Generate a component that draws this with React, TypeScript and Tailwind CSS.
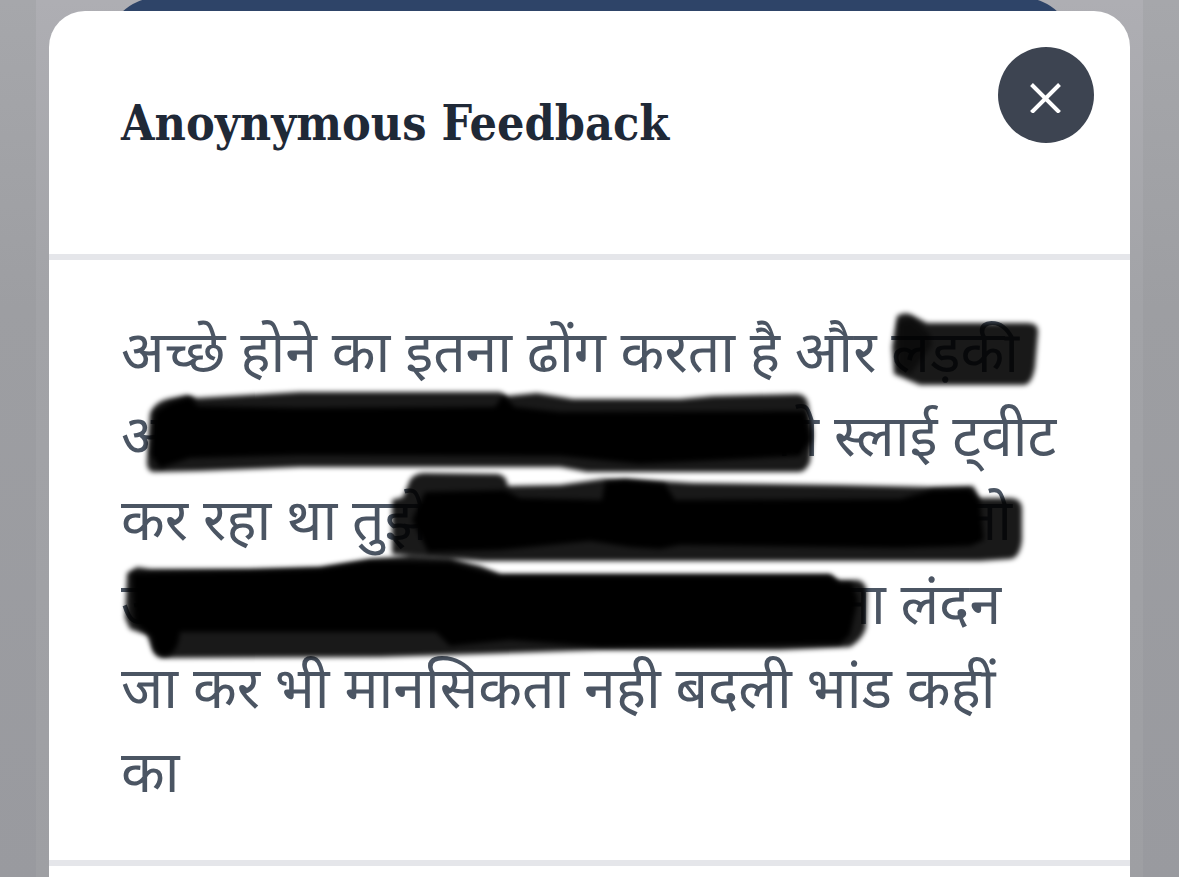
import { useState } from "react";

function CloseIcon() {
  return (
    <svg
      className="h-9 w-9"
      viewBox="0 0 36 36"
      fill="none"
      stroke="currentColor"
      strokeWidth="4"
      aria-hidden="true"
    >
      <path d="M3.5 7.5 31.5 35.5M31.5 7.5 3.5 35.5" />
    </svg>
  );
}

// black marker drawn over the hidden words
function Marker() {
  return (
    <svg
      className="pointer-events-none absolute top-0 left-0 h-[600px] w-[1081px] max-w-none"
      viewBox="49 260 1081 600"
      aria-hidden="true"
    >
      <defs>
        <filter id="soft" x="-5%" y="-20%" width="110%" height="140%">
          <feGaussianBlur stdDeviation="2.5" />
        </filter>
      </defs>
      <g filter="url(#soft)" fill="#000" fillOpacity="0.9">
        <path d="M897 316 Q903 312 910 314 L927 323 H1027 Q1039 323 1038 332 L1035 367 Q1032 385 1023 385 H920 L894 374 L892 347Z" />
        <path d="M150 413 Q155 402 167 399 L187 395 L197 398 L300 392 H500 L507 396 L537 393 L573 399 H680 L713 396 L798 394 Q806 395 808 403 L813 433 L810 462 Q806 472 798 472 H587 L560 467 H300 L200 471 L153 472 Q146 470 147 460Z" />
        <path d="M392 500 L403 497 L410 480 Q415 473 424 473 L498 474 Q506 475 508 486 L560 485 L603 479 L627 479 L693 483 L840 485 L930 487 L973 486 L980 498 H1010 Q1021 498 1022 508 V540 Q1020 558 1010 559 L980 561 H483 L392 554Z" />
        <path d="M127 573 L137 567 L150 569 H250 L320 567 L370 559 L410 556 L450 559 L480 566 L500 574 H830 L838 580 H858 Q866 582 867 592 L866 628 Q862 640 850 647 L780 650 H600 L480 654 L380 657 L162 658 Q153 657 151 645 L147 635 L130 629 L125 618Z" />
      </g>
      <g filter="url(#soft)" fill="#000">
        <path d="M898 322 L912 318 L930 334 L932 345 L910 375 L898 368Z" fillOpacity="0.5" />
        <path d="M155 412 L170 403 L190 397 L198 406 L300 408 L495 407 L503 395 L515 407 L560 412 L805 411 L811 440 L800 456 L640 464 L560 456 L300 455 L190 458 L160 468 L151 455Z" />
        <path d="M425 492 L505 490 L520 498 L602 500 L605 482 L625 480 L665 484 L675 500 L900 499 L932 490 L970 489 L980 502 L984 540 L970 546 L900 548 L680 545 L660 549 L630 547 L590 541 L500 550 L428 552 L412 520Z" />
        <path d="M132 573 L250 571 L320 569 L370 561 L450 562 L500 576 L830 576 L840 583 L852 583 L858 600 L850 635 L840 644 L600 647 L510 640 L450 646 L436 632 H180 Q178 655 164 656 Q152 654 152 637 L134 622Z" />
      </g>
    </svg>
  );
}

export default function App() {
  const [open, setOpen] = useState<boolean>(true);

  return (
    <div className="relative flex min-h-screen flex-col overflow-hidden bg-linear-to-b from-[#a6a7ab] via-[#9d9ea2] via-35% to-[#999a9f] px-9">
      <div className="relative flex flex-1 flex-col bg-linear-to-b from-[#aeaeb3] via-[#a2a3a7] via-35% to-[#9e9fa3] px-[13px] pt-[11px]">
        {/* page card behind the modal */}
        <div className="absolute -top-[2px] right-[71px] left-[72px] h-24 rounded-t-[48px] bg-[#2e4468]" />

        {open && (
          <section
            role="dialog"
            aria-labelledby="feedback-title"
            className="relative flex flex-1 flex-col rounded-t-[36px] bg-white"
          >
            <header className="flex h-[249px] items-start justify-between border-b-6 border-[#e5e6ea] pt-9 pr-9 pl-[72px]">
              <h2
                id="feedback-title"
                className="pt-9 font-['DejaVu_Serif_Condensed','DejaVu_Serif',serif] text-[48px] leading-[80px] font-bold text-[#1f2937]"
              >
                Anoynymous Feedback
              </h2>
              <button
                type="button"
                aria-label="Close"
                onClick={() => setOpen(false)}
                className="flex h-24 w-24 items-center justify-center rounded-full bg-[#3d4451] text-white"
              >
                <CloseIcon />
              </button>
            </header>

            <div className="relative border-b-6 border-[#e5e6ea] px-[72px] pt-14 pb-10">
              <p
                lang="hi"
                className="font-['Noto_Sans_Devanagari','Noto_Sans',sans-serif] text-[57px] leading-[84px] whitespace-nowrap text-[#4b5563]"
              >
                अच्छे होने का इतना ढोंग करता है और लड़की
                <br />
                अ<span className="inline-block w-[596px]" />
                को स्लाई ट्वीट
                <br />
                कर रहा था तुझे
                <span className="inline-block w-[537px]" />
                तो
                <br />उ<span className="inline-block w-[687px]" />
                ना लंदन
                <br />
                जा कर भी मानसिकता नही बदली भांड कहीं
                <br />
                का
              </p>
              <Marker />
            </div>
          </section>
        )}
      </div>
    </div>
  );
}
